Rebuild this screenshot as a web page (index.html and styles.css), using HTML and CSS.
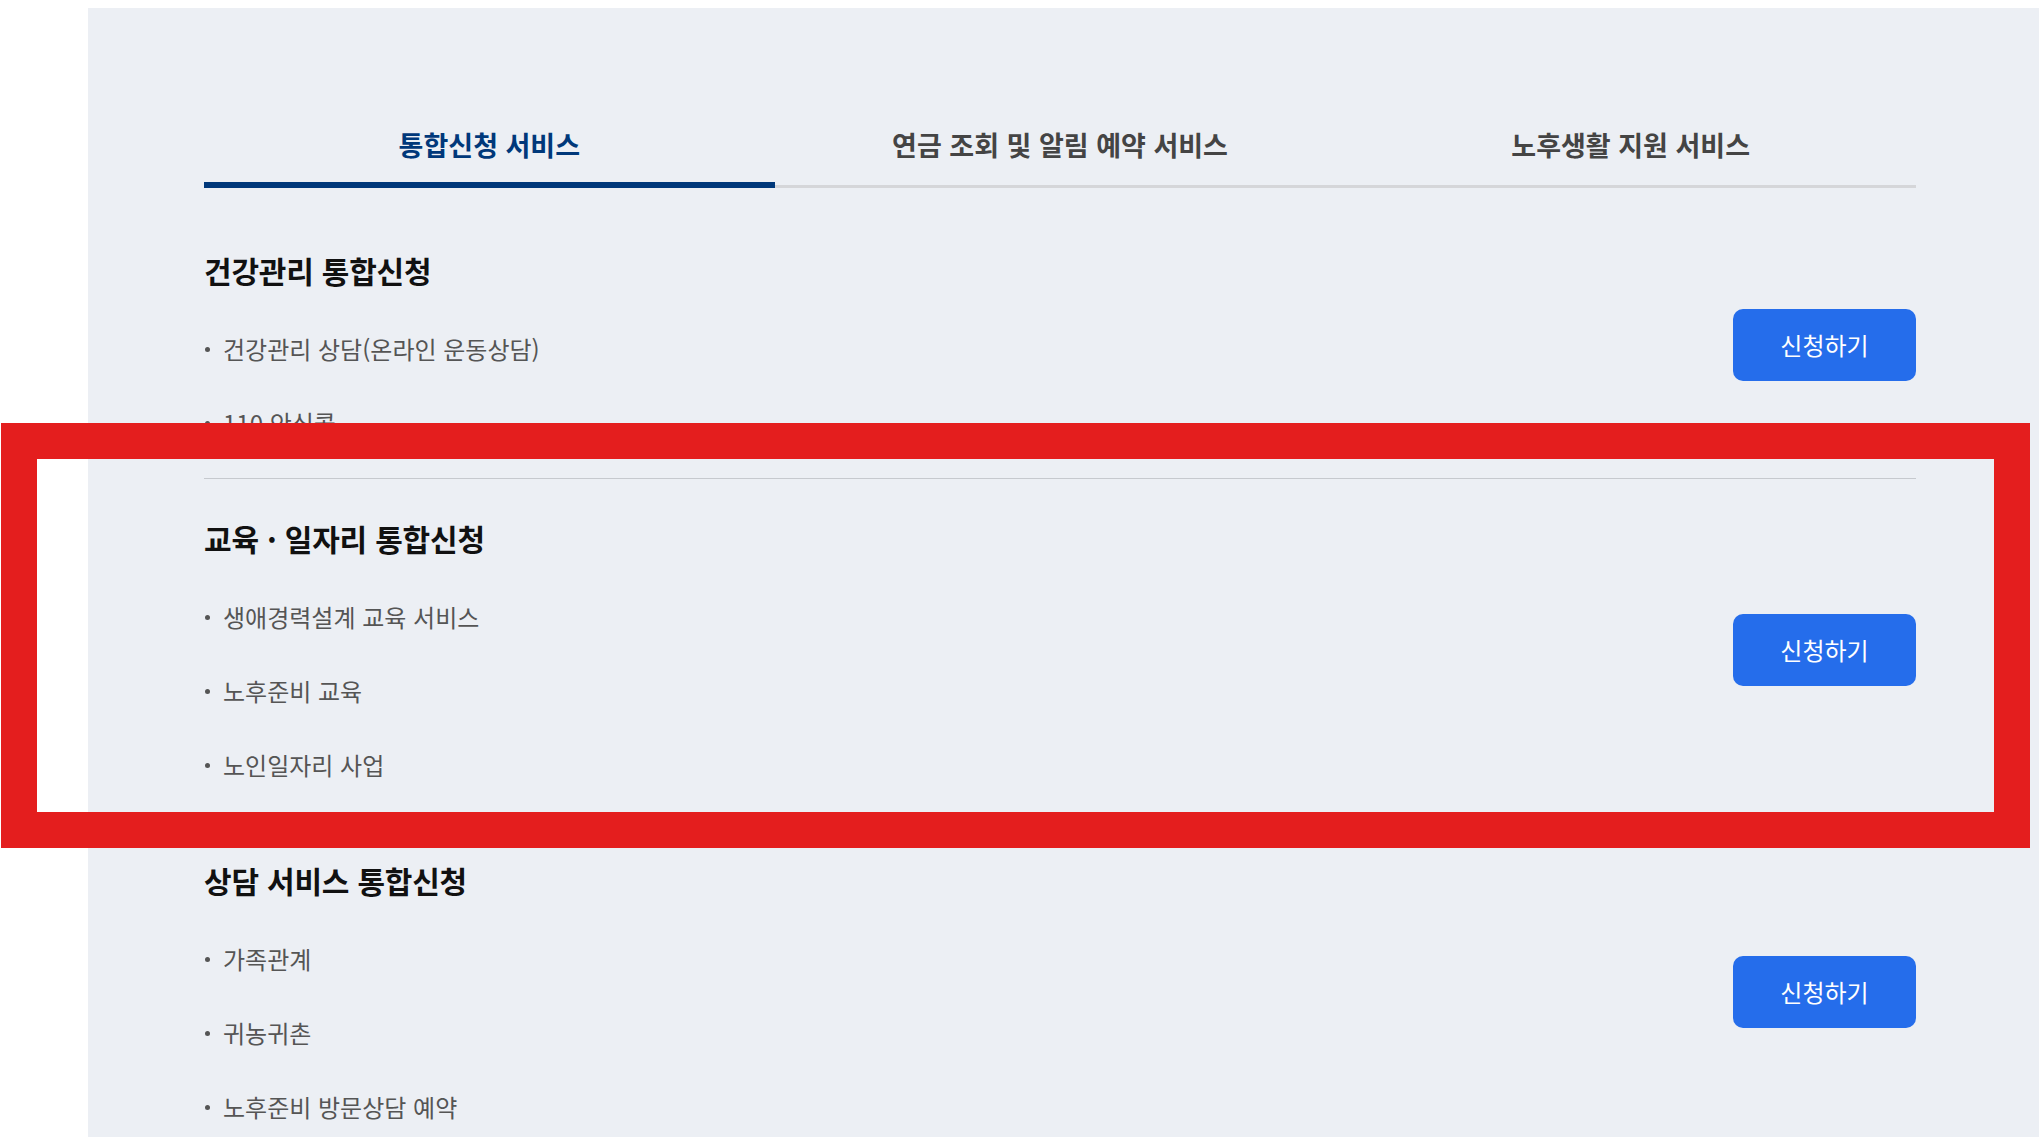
FILE: index.html
```html
<!DOCTYPE html>

<html lang="ko">
<head>
    <title>통합신청 서비스</title>
    <meta charset="UTF-8">
    <meta name="viewport" content="width=device-width">

    <link rel="stylesheet" href="styles.css">
</head>
<body>

<div class="panel">
    <div class="tabs">
        <div class="tab active">통합신청 서비스</div>
        <div class="tab">연금 조회 및 알림 예약 서비스</div>
        <div class="tab">노후생활 지원 서비스</div>
    </div>

    <div class="sections">
        <div class="section">
            <div class="info">
                <h3>건강관리 통합신청</h3>
                <ul>
                    <li>건강관리 상담(온라인 운동상담)</li>
                    <li>110 안심콜</li>
                </ul>
            </div>
            <a class="apply" href="#">신청하기</a>
        </div>

        <div class="section">
            <div class="info">
                <h3>교육 · 일자리 통합신청</h3>
                <ul>
                    <li>생애경력설계 교육 서비스</li>
                    <li>노후준비 교육</li>
                    <li>노인일자리 사업</li>
                </ul>
            </div>
            <a class="apply" href="#">신청하기</a>
        </div>

        <div class="section">
            <div class="info">
                <h3>상담 서비스 통합신청</h3>
                <ul>
                    <li>가족관계</li>
                    <li>귀농귀촌</li>
                    <li>노후준비 방문상담 예약</li>
                </ul>
            </div>
            <a class="apply" href="#">신청하기</a>
        </div>
    </div>
</div>

<!-- highlight frame -->
<div class="highlight"></div>

</body>
</html>
```

FILE: styles.css
```css
html,
body{
    height: 100%;
    overflow: hidden;
}

body{
    margin: 0;
    background-color: #ffffff;
    font-family: "Noto Sans CJK KR", "Noto Sans", sans-serif;
    color: #111111;
}

.panel{
    margin: 8px 0 0 88px;
    padding: 119px 123px 0 116px;
    background-color: #eceff4;
    min-height: 100%;
}

.tabs{
    display: flex;
}

.tab{
    flex: 1;
    text-align: center;
    font-size: 27px;
    font-weight: bold;
    line-height: 36px;
    color: #444444;
    padding-bottom: 22px;
    border-bottom: 3px solid #d5d6d9;
}

.tab.active{
    color: #00387a;
    padding-bottom: 19px;
    border-bottom: 6px solid #00387a;
}

.sections{
    margin-top: 23px;
}

.section{
    display: flex;
    align-items: center;
    justify-content: space-between;
    padding: 39px 0 38px;
}

.section + .section{
    border-top: 1px solid #c6c9ce;
}

.section h3{
    margin: 0;
    font-size: 30px;
    font-weight: bold;
    letter-spacing: -0.2px;
    line-height: 40px;
    color: #111111;
}

.section ul{
    margin: 42px 0 0;
    padding: 0;
    list-style: none;
}

.section li{
    font-size: 24px;
    line-height: 34px;
    color: #555555;
}

.section li + li{
    margin-top: 40px;
}

.section li:before{
    content: "";
    display: inline-block;
    width: 5px;
    height: 5px;
    margin: 0 13px 5px 1px;
    border-radius: 50%;
    background-color: #555555;
    vertical-align: middle;
}

.apply{
    flex-shrink: 0;
    width: 183px;
    height: 72px;
    line-height: 72px;
    text-align: center;
    border-radius: 10px;
    background-color: #256deb;
    color: #ffffff;
    font-size: 24px;
    text-decoration: none;
}

.highlight{
    position: absolute;
    left: 1px;
    top: 423px;
    width: 2029px;
    height: 425px;
    box-sizing: border-box;
    border: 36px solid #e41e1e;
}
```
